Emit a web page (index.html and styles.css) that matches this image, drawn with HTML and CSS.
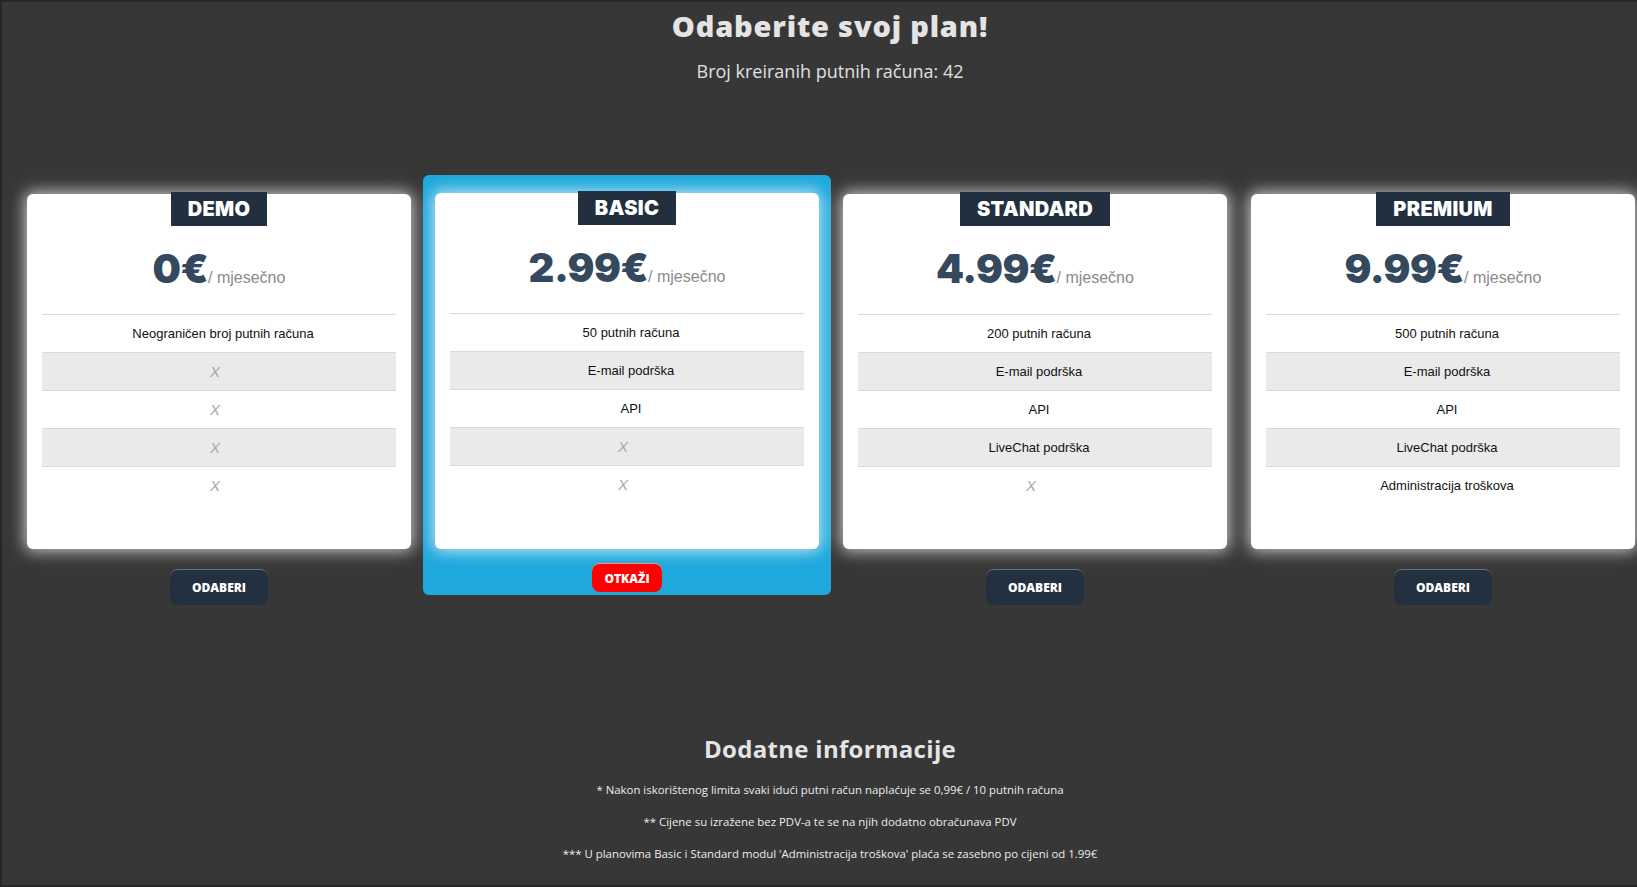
FILE: index.html
```html
<!DOCTYPE html>
<html lang="hr">
<head>
<meta charset="utf-8">
<title>Odaberite svoj plan!</title>
<link rel="stylesheet" href="styles.css">
</head>
<body>
<div class="page">
  <header class="header">
    <h1 class="title">Odaberite svoj plan!</h1>
    <p class="subtitle">Broj kreiranih putnih računa: 42</p>
  </header>

  <section class="plans">
    <div class="plan">
      <div class="card">
        <div class="card-head"><span class="plan-name">DEMO</span></div>
        <div class="price"><span class="amount">0€</span><span class="period">/ mjesečno</span></div>
        <ul class="features">
          <li>Neograničen broj putnih računa</li>
          <li class="no">X</li>
          <li class="no">X</li>
          <li class="no">X</li>
          <li class="no">X</li>
        </ul>
      </div>
      <button class="btn">ODABERI</button>
    </div>

    <div class="plan plan-active">
      <div class="card">
        <div class="card-head"><span class="plan-name">BASIC</span></div>
        <div class="price"><span class="amount">2.99€</span><span class="period">/ mjesečno</span></div>
        <ul class="features">
          <li>50 putnih računa</li>
          <li>E-mail podrška</li>
          <li>API</li>
          <li class="no">X</li>
          <li class="no">X</li>
        </ul>
      </div>
      <button class="btn btn-cancel">OTKAŽI</button>
    </div>

    <div class="plan">
      <div class="card">
        <div class="card-head"><span class="plan-name">STANDARD</span></div>
        <div class="price"><span class="amount">4.99€</span><span class="period">/ mjesečno</span></div>
        <ul class="features">
          <li>200 putnih računa</li>
          <li>E-mail podrška</li>
          <li>API</li>
          <li>LiveChat podrška</li>
          <li class="no">X</li>
        </ul>
      </div>
      <button class="btn">ODABERI</button>
    </div>

    <div class="plan">
      <div class="card">
        <div class="card-head"><span class="plan-name">PREMIUM</span></div>
        <div class="price"><span class="amount">9.99€</span><span class="period">/ mjesečno</span></div>
        <ul class="features">
          <li>500 putnih računa</li>
          <li>E-mail podrška</li>
          <li>API</li>
          <li>LiveChat podrška</li>
          <li>Administracija troškova</li>
        </ul>
      </div>
      <button class="btn">ODABERI</button>
    </div>
  </section>

  <section class="info">
    <h2 class="info-title">Dodatne informacije</h2>
    <p class="note">* Nakon iskorištenog limita svaki idući putni račun naplaćuje se 0,99€ / 10 putnih računa</p>
    <p class="note">** Cijene su izražene bez PDV-a te se na njih dodatno obračunava PDV</p>
    <p class="note">*** U planovima Basic i Standard modul 'Administracija troškova' plaća se zasebno po cijeni od 1.99€</p>
  </section>
</div>
</body>
</html>
```

FILE: styles.css
```css
* { box-sizing: border-box; }

html, body {
  margin: 0;
  padding: 0;
  background: #272727;
  overflow: hidden;
}

.page {
  margin: 2px 0 2px 2px;
  width: 1656px;
  height: 883px;
  background: #373737;
  overflow: hidden;
  font-family: "Open Sans", "Noto Sans", sans-serif;
  color: #e2e2e2;
}

.header {
  padding-top: 7px;
  text-align: center;
}

.title {
  margin: 0;
  font-size: 29px;
  line-height: 34px;
  font-weight: 800;
  letter-spacing: 0.8px;
  color: #e4e4e4;
}

.subtitle {
  margin: 17px 0 0;
  font-size: 18px;
  line-height: 22px;
  color: #e0e0e0;
}

.plans {
  display: flex;
  align-items: flex-start;
  margin-top: 93px;
  margin-left: 13px;
}

.plan {
  flex: 0 0 408px;
  width: 408px;
  padding: 19px 12px 0;
  display: flex;
  flex-direction: column;
  align-items: center;
}

.plan-active {
  background: #1fa8dc;
  border-radius: 6px;
  padding: 18px 12px 3px;
}

.card {
  width: 384px;
  height: 355px;
  background: #fff;
  border-radius: 6px;
  box-shadow: 0 0 16px 2px rgba(255, 255, 255, 0.75);
  padding: 0 15px;
  font-family: "Liberation Sans", Arial, sans-serif;
}

.plan-active .card {
  height: 356px;
}

.card-head {
  text-align: center;
  margin-top: -2px;
  height: 34px;
}

.plan-name {
  display: inline-block;
  height: 34px;
  line-height: 34px;
  padding: 0 17px;
  background: #212f3e;
  color: #fff;
  font-family: "Inter", "Liberation Sans", sans-serif;
  font-weight: 900;
  font-size: 20px;
  letter-spacing: 0.3px;
}

.price {
  text-align: center;
  height: 88px;
  padding-top: 19px;
  white-space: nowrap;
}

.amount {
  font-family: "Inter", "Liberation Sans", sans-serif;
  font-weight: 900;
  font-size: 40px;
  line-height: 48px;
  color: #34495e;
  letter-spacing: -0.5px;
}

.period {
  font-size: 16px;
  color: #8a8a8a;
}

.features {
  list-style: none;
  margin: 0;
  padding: 0;
  border-top: 1px solid #d8d8e2;
}

.features li {
  height: 37px;
  line-height: 38px;
  text-align: center;
  font-size: 13px;
  color: #111;
  padding-left: 8px;
}

.features li:nth-child(-n+4) {
  height: 38px;
  border-bottom: 1px solid #d8d8e2;
}

.features li:nth-child(even) {
  background: #eaeaea;
}

.features li.no {
  padding-left: 0;
  padding-right: 8px;
  color: #a8a8a8;
  font-style: italic;
  font-size: 15px;
  font-weight: 300;
}

.btn {
  margin-top: 20px;
  width: 98px;
  height: 36px;
  border: none;
  border-top: 1px solid #6a6f76;
  border-radius: 8px;
  background: #22303f;
  color: #fff;
  font-family: "Open Sans", "Noto Sans", sans-serif;
  font-weight: 800;
  font-size: 12px;
  padding: 0;
  cursor: pointer;
}

.btn-cancel {
  margin-top: 14px;
  width: 70px;
  height: 29px;
  background: #ff0000;
  border-top: 1px solid #ff8a8a;
  font-size: 12px;
}

.info {
  margin-top: 129px;
  text-align: center;
}

.info-title {
  margin: 0 0 18px;
  font-size: 24px;
  line-height: 30px;
  font-weight: 700;
  letter-spacing: 0.3px;
  color: #e4e4e4;
}

.note {
  margin: 0 0 16px;
  font-size: 11.4px;
  line-height: 16px;
  color: #ececec;
}
```
